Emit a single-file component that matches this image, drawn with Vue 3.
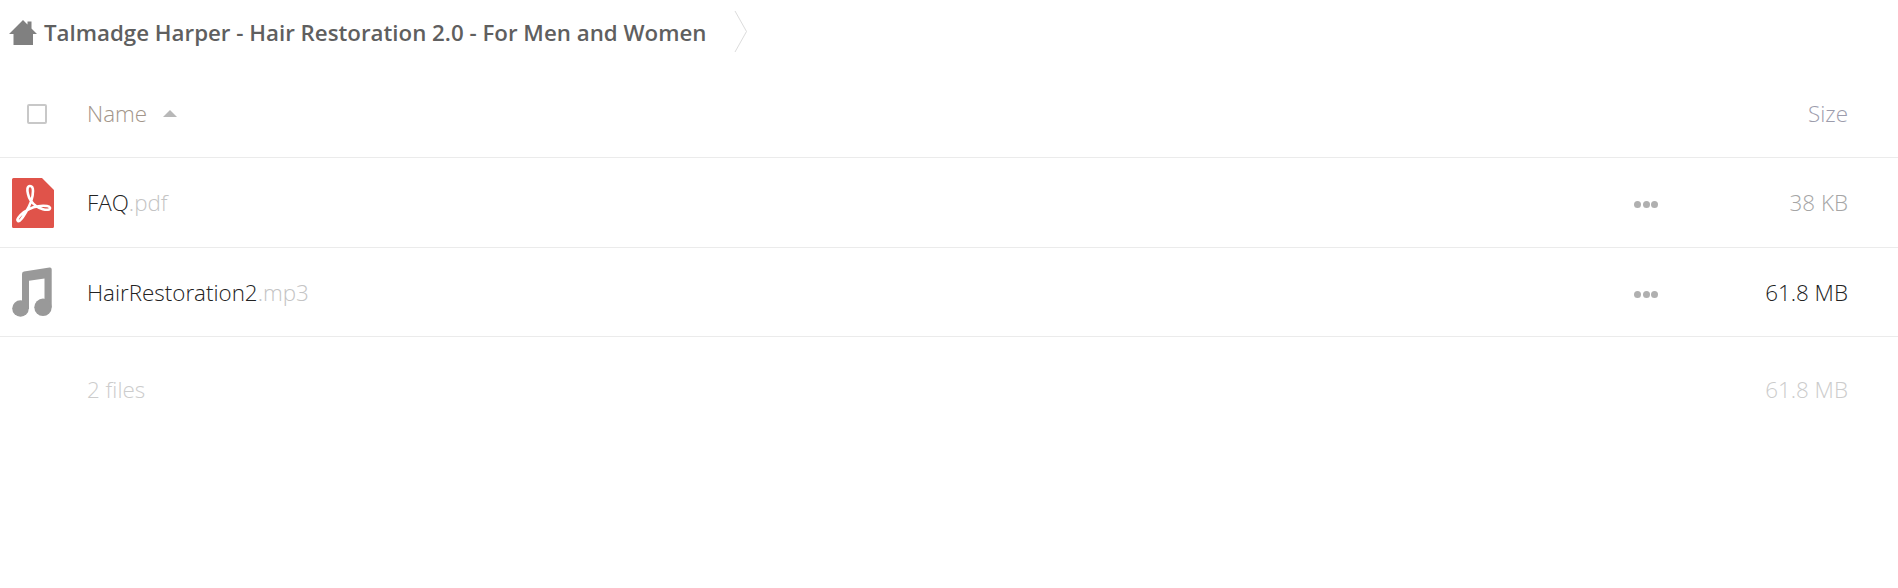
<template>
  <div class="page">
    <div class="crumbs">
      <svg class="home" viewBox="0 0 28 25" width="28" height="25">
        <path d="M14 0 L18.5 4.5 V1.5 H22.5 V8.5 L28 14 H24 V25 H4.5 V14 H0 Z" fill="#808080" />
      </svg>
      <span class="crumb-title">Talmadge Harper - Hair Restoration 2.0 - For Men and Women</span>
      <svg class="chevron" viewBox="0 0 14 44" width="14" height="44">
        <path d="M1 1 L12.5 21.5 L1 42" fill="none" stroke="#dcdcdc" stroke-width="1" />
      </svg>
    </div>

    <div class="row head">
      <div class="icon-col"><span class="check"></span></div>
      <div class="name-col head-name">
        Name
        <span class="sort"></span>
      </div>
      <div class="size-col head-size">Size</div>
    </div>

    <div v-for="f in files" :key="f.name" class="row file">
      <div class="icon-col file-icon">
        <svg v-if="f.ext === '.pdf'" viewBox="0 0 42 50" width="42" height="50">
          <path d="M1.5 0 H30 L42 12 V48.5 A1.5 1.5 0 0 1 40.5 50 H1.5 A1.5 1.5 0 0 1 0 48.5 V1.5 A1.5 1.5 0 0 1 1.5 0 Z" fill="#e0534a" />
          <path d="M18 8 C15 8 15 12 16 16 C17 21 20 25 24 28 C28 31 34 32.5 37 31.5 C39 30.5 38 28.5 35 28 C27 27 18 30 12 34 C7 38 4 42 6 43 C8 44 11 39 14 34 C17 29 21 20 21 13 C21 10 20 8 18 8 Z" fill="none" stroke="#fff" stroke-width="2.6" />
        </svg>
        <svg v-else viewBox="0 0 40 50" width="40" height="50">
          <path d="M10 7 Q10 5 12 4.6 L37.5 .6 Q39.7 .3 39.7 2.5 V40 H32.5 V11.5 L17 13.7 V42 H10 Z" fill="#999" />
          <circle cx="8.5" cy="41.5" r="8.3" fill="#999" />
          <circle cx="31" cy="40.3" r="8.7" fill="#999" />
        </svg>
      </div>
      <div class="name-col file-name">{{ f.name }}<span class="ext">{{ f.ext }}</span></div>
      <div class="dots"><i></i><i></i><i></i></div>
      <div class="size-col" :class="f.sizeClass">{{ f.size }}</div>
    </div>

    <div class="row foot">
      <div class="icon-col"></div>
      <div class="name-col">2 files</div>
      <div class="size-col">61.8 MB</div>
    </div>
  </div>
</template>

<script setup>
const files = [
  { name: 'FAQ', ext: '.pdf', size: '38 KB', sizeClass: 'size-light' },
  { name: 'HairRestoration2', ext: '.mp3', size: '61.8 MB', sizeClass: 'size-dark' },
]
</script>

<style>
html, body { background: #fff; }
</style>

<style scoped>
.page {
  width: 1898px;
  height: 588px;
  overflow: hidden;
  background: #fff;
  font-family: "Open Sans", "Noto Sans", sans-serif;
}
.crumbs {
  display: flex;
  align-items: center;
  height: 64px;
  padding-left: 9px;
}
.home { flex: none; margin-right: 7px; }
.crumb-title {
  font-size: 22.3px;
  font-weight: 600;
  color: #5f5f5f;
  white-space: nowrap;
}
.chevron { flex: none; margin-left: 28px; }
.row {
  display: flex;
  align-items: center;
  padding-right: 50px;
  border-bottom: 1px solid #ebebeb;
  box-sizing: border-box;
}
.icon-col { width: 87px; flex: none; }
.name-col { flex: 1; font-size: 22.4px; font-weight: 300; }
.size-col { width: 190px; flex: none; font-size: 22.4px; font-weight: 300; text-align: right; }
.head { height: 94px; padding-top: 2px; }
.head .icon-col { padding-left: 27px; box-sizing: border-box; }
.head .icon-col .check { margin-top: 5px; }
.check {
  display: block;
  width: 20px;
  height: 20px;
  box-sizing: border-box;
  border: 2px solid #c8c8c8;
  border-radius: 2px;
}
.head-name {
  display: flex;
  align-items: center;
  gap: 16px;
  color: #a3968a;
  padding-top: 3px;
}
.sort {
  width: 0;
  height: 0;
  border-left: 7px solid transparent;
  border-right: 7px solid transparent;
  border-bottom: 7px solid #b8b8b8;
}
.head-size { color: #9c9cac; padding-top: 3px; }
.file { height: 90px; }
.file + .file { height: 89px; }
.file-icon { padding-left: 12px; box-sizing: border-box; display: flex; align-items: center; }
.file-name { color: #222; }
.ext { color: #c4c4c4; }
.dots {
  display: flex;
  flex: none;
  gap: 1.5px;
  width: 24px;
  padding-top: 4px;
}
.dots i {
  display: block;
  width: 7px;
  height: 7px;
  border-radius: 50%;
  background: #b0b0b0;
}
.size-light { color: #a5a5a5; }
.size-dark { color: #222; }
.foot {
  height: 104px;
  border-bottom: none;
  color: #ccc;
}
</style>
